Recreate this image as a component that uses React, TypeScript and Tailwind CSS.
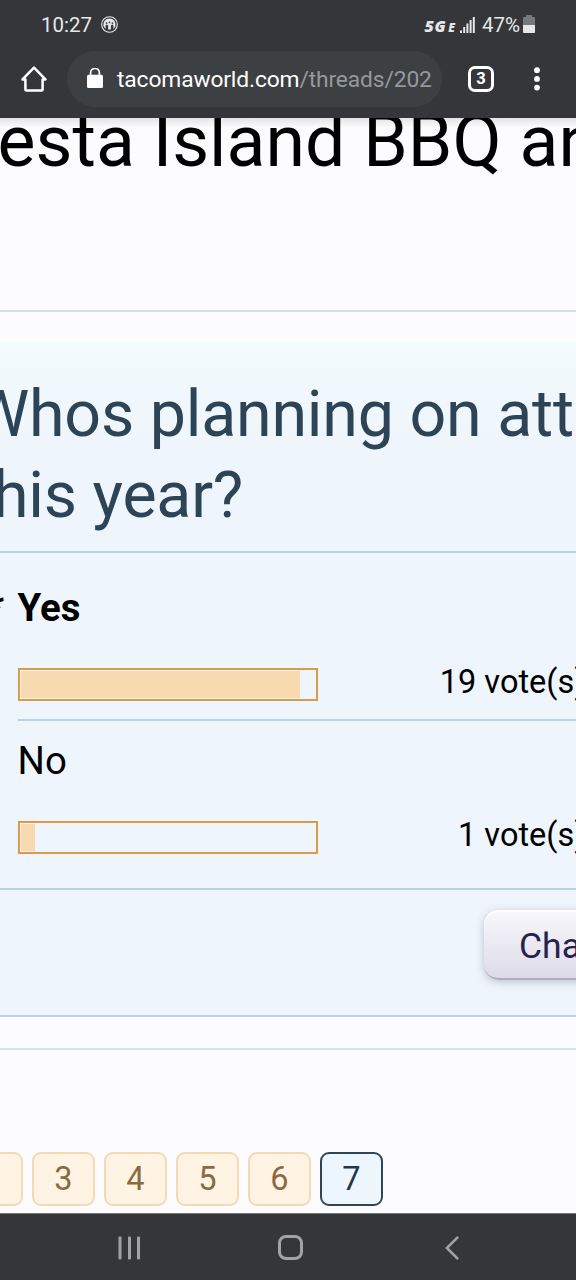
import { Fragment } from "react";

interface PollOption {
    label: string;
    votes: number;
    percent: number;
    mine?: boolean;
}

const options: PollOption[] = [
    { label: "Yes", votes: 19, percent: 95, mine: true },
    { label: "No", votes: 1, percent: 5 },
];

const pages = [2, 3, 4, 5, 6, 7];
const currentPage = 7;

function StatusBar() {
    return (
        <div className="flex h-[48px] items-center justify-between pl-[41px] pr-[41px] pt-[2px] text-[#e6e7e9]">
            <div className="flex items-center gap-[9px]">
                <span className="text-[20.5px] leading-6">10:27</span>
                <svg className="-mt-px" width="17" height="17" viewBox="0 0 17 17" fill="none">
                    <circle cx="8.5" cy="8.5" r="7.8" stroke="currentColor" strokeWidth="1.1" />
                    <path
                        d="M2.6 10.6C1.8 5.6 4.6 2.6 8.5 2.6s6.7 3 5.9 8l-2 2.4V9.2l-1.3-.7-1.2.9v4.2H7.1V9.4l-1.2-.9-1.3.7V13z"
                        fill="currentColor"
                    />
                    <circle cx="5.6" cy="7.1" r="0.9" fill="#353639" />
                    <circle cx="8.5" cy="6.3" r="0.9" fill="#353639" />
                    <circle cx="11.4" cy="7.1" r="0.9" fill="#353639" />
                </svg>
            </div>
            <div className="flex items-center">
                <div className="flex items-baseline pt-[3px] font-['Open_Sans',sans-serif] font-extrabold italic leading-6">
                    <span className="text-[16px] tracking-[0.6px]">5G</span>
                    <span className="ml-[2px] text-[12px]">E</span>
                </div>
                <svg className="ml-[5px]" width="15" height="16" viewBox="0 0 15 16" fill="currentColor">
                    <rect x="0" y="13.5" width="2" height="2.5" />
                    <rect x="3.2" y="10" width="2" height="6" />
                    <rect x="6.4" y="6.5" width="2" height="9.5" />
                    <rect x="9.6" y="3" width="2" height="13" />
                    <rect x="12.8" y="0" width="2" height="16" />
                </svg>
                <span className="ml-[7px] text-[20.5px] leading-6">47%</span>
                <svg className="ml-[3px] -mt-[2px]" width="12" height="18" viewBox="0 0 12 18">
                    <path d="M3 0h6v2h2a1 1 0 0 1 1 1v7H0V3a1 1 0 0 1 1-1h2z" fill="#77787b" />
                    <path d="M0 10h12v7a1 1 0 0 1-1 1H1a1 1 0 0 1-1-1z" fill="currentColor" />
                </svg>
            </div>
        </div>
    );
}

function AddressBar() {
    return (
        <div className="flex h-[70px] items-center pb-[8px] pl-[21px]">
            <svg width="26" height="26" viewBox="0 0 26 26" fill="none" stroke="#fff" strokeWidth="2.5" strokeLinejoin="round" strokeLinecap="round">
                <path d="M1.5 13.4 13 1.7l11.5 11.7H21.6v10.2a1 1 0 0 1-1 1H5.4a1 1 0 0 1-1-1V13.4z" />
            </svg>
            <div className="ml-[20px] flex h-[56px] w-[375px] items-center rounded-full bg-[#3c4043] pl-[20px]">
                <svg className="-mt-[2px]" width="16" height="20" viewBox="0 0 16 20" fill="none">
                    <path d="M3.6 8V4.8a4.4 4.4 0 0 1 8.8 0V8" stroke="#fff" strokeWidth="1.7" />
                    <rect x="0" y="6.8" width="16" height="13.2" rx="1.6" fill="#fff" />
                </svg>
                <p className="ml-[14px] mt-[2px] whitespace-nowrap text-[22.8px] leading-7 tracking-[-0.13px] text-white">
                    tacomaworld.com<span className="text-[#95989c]">/threads/202</span>
                </p>
            </div>
            <div className="ml-[26px] flex h-[26px] w-[26px] items-center justify-center rounded-[7px] border-[3px] border-white text-[16.5px] font-bold leading-none text-white">
                3
            </div>
            <svg className="ml-[40px]" width="6" height="24" viewBox="0 0 6 24" fill="#fff">
                <circle cx="3" cy="3.2" r="2.9" />
                <circle cx="3" cy="11.9" r="2.9" />
                <circle cx="3" cy="20.6" r="2.9" />
            </svg>
        </div>
    );
}

function OptionRow({ option }: { option: PollOption }) {
    return (
        <Fragment>
            <div className="relative text-[38.4px] leading-[48px]">
                {option.mine && <span className="absolute -left-[32px] font-bold italic">*</span>}
                <p className={option.mine ? "font-bold" : ""}>{option.label}</p>
            </div>
            <div className="mt-[36px] flex h-[33px] items-center">
                <div className="h-[33px] w-[300px] shrink-0 border-2 border-[#dc9a45] p-px">
                    <div className="h-full bg-[#f8d9b0]" style={{ width: `${option.percent}%` }} />
                </div>
                <span className="-mt-[6px] ml-[110px] w-[158px] shrink-0 whitespace-nowrap text-right text-[32.5px] leading-9">
                    {option.votes} vote(s)
                </span>
            </div>
        </Fragment>
    );
}

function Poll() {
    return (
        <section className="mt-[30px] h-[675px] overflow-hidden border-b-2 border-[#b5d3e6] bg-[#eef5fc]">
            <div className="h-[211px] border-b-2 border-[#b5d3e6] bg-gradient-to-b from-[#f4fbfd] to-[#eef5fc] to-50% pt-[32px]">
                <h2 className="-ml-[28px] whitespace-nowrap text-[64.5px] leading-[81px] tracking-[-0.22px] text-[#2c4456]">
                    Whos planning on attending
                    <br />
                    this year?
                </h2>
            </div>
            <div className="ml-[17.5px] h-[168px] border-b-2 border-[#b9d3e8] pt-[31px]">
                <OptionRow option={options[0]} />
            </div>
            <div className="h-[169px] border-b-2 border-[#b5d3e6] pl-[17.5px] pt-[16px]">
                <OptionRow option={options[1]} />
            </div>
            <div className="flex pl-[484px] pt-[20px]">
                <button className="h-[70px] w-[260px] shrink-0 rounded-[15px] border-b-2 border-t-2 border-b-[#adadbd] border-t-white bg-gradient-to-b from-[#f8f7fb] to-[#dddbe9] pl-[35px] pt-px text-left text-[35.5px] leading-[40px] text-[#25224f] shadow-[0_2px_9px_rgba(80,80,110,0.3)]">
                    Change Vote
                </button>
            </div>
        </section>
    );
}

function Pagination() {
    return (
        <nav className="-ml-[40px] mt-[102px] flex gap-[9px]">
            {pages.map((page) => (
                <a
                    key={page}
                    className={`flex h-[54px] w-[63px] shrink-0 items-center justify-center rounded-[9px] border-2 pt-px text-[32.5px] leading-none ${
                        page === currentPage
                            ? "border-[#304657] bg-[#edf6fc] text-[#1c3850]"
                            : "border-[#f3dab5] bg-[#fff3e4] text-[#8b6a43]"
                    }`}
                >
                    {page}
                </a>
            ))}
        </nav>
    );
}

function NavigationBar() {
    return (
        <footer className="flex h-[67px] shrink-0 items-center border-t border-[#77787b] bg-[#353639] pl-[118px] pt-px">
            <svg width="23" height="24" viewBox="0 0 23 24" fill="#a2a3a6">
                <rect x="0.5" y="0.5" width="3" height="23" rx="1" />
                <rect x="10" y="0.5" width="3" height="23" rx="1" />
                <rect x="19" y="0.5" width="3" height="23" rx="1" />
            </svg>
            <div className="ml-[137px] h-[25px] w-[25px] rounded-[8px] border-[3px] border-[#a2a3a6]" />
            <svg className="ml-[142px]" width="14" height="24" viewBox="0 0 14 24" fill="none" stroke="#a2a3a6" strokeWidth="2.6" strokeLinecap="round">
                <path d="M12.3 1.7 1.9 12l10.4 10.3" />
            </svg>
        </footer>
    );
}

export default function App() {
    return (
        <div className="flex h-[1280px] w-[576px] flex-col overflow-hidden bg-[#fcfcfe] font-[Roboto,sans-serif] text-black">
            <header className="h-[118px] shrink-0 bg-[#353639]">
                <StatusBar />
                <AddressBar />
            </header>
            <main className="h-[1095px] shrink-0 overflow-hidden bg-gradient-to-b from-[#e4e4e8] to-[#fcfcfe] to-[10px]">
                <div className="h-[194px] border-b-2 border-[#d3e0ea]">
                    <h1 className="-ml-[2.5px] whitespace-nowrap text-[71.5px] leading-[47px] tracking-[0.06px]">
                        esta Island BBQ and
                    </h1>
                </div>
                <Poll />
                <div className="mt-[31px] border-b-2 border-[#d0e4f0]" />
                <Pagination />
            </main>
            <NavigationBar />
        </div>
    );
}
